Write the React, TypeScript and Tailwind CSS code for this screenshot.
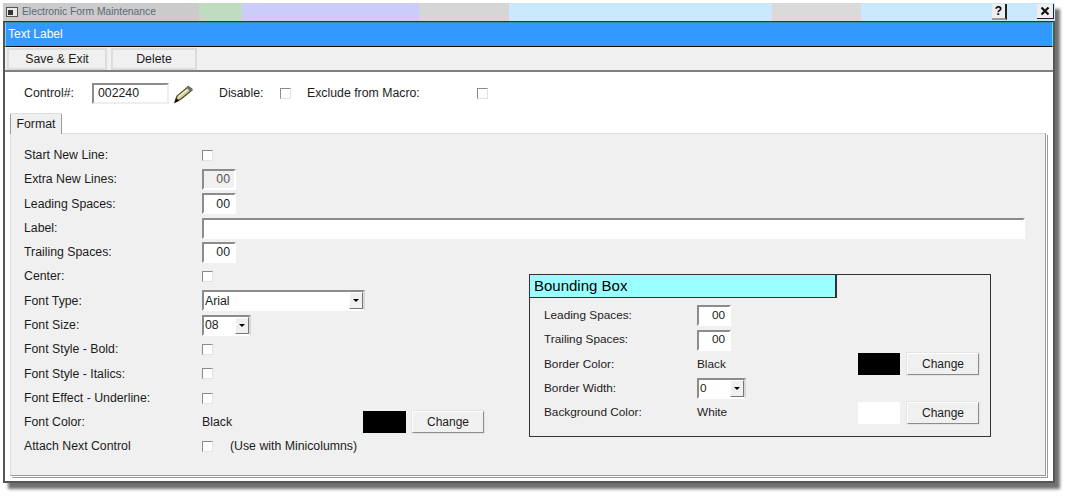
const Check = () => (
  <span className="block h-[11px] w-[11px] border border-t-[#8a8a8a] border-l-[#8a8a8a] border-r-[#e2e2e2] border-b-[#e2e2e2] bg-white" />
);

const NumBox = ({ value, disabled }: { value: string; disabled?: boolean }) => (
  <div
    className={`flex h-[21px] w-[34px] items-center justify-end border-2 border-t-[#8c8c8c] border-l-[#8c8c8c] border-r-white border-b-white pr-[4px] ${
      disabled ? "bg-[#f0f0f0] text-[#555]" : "bg-white"
    }`}
  >
    {value}
  </div>
);

const Select = ({ value, width }: { value: string; width: string }) => (
  <div
    className={`flex h-[21px] items-center justify-between border-2 border-t-[#8c8c8c] border-l-[#8c8c8c] border-r-[#d8d8d8] border-b-white bg-white pl-[1px] ${width}`}
  >
    <span>{value}</span>
    <span className="flex h-[17px] w-[14px] items-center justify-center border border-t-white border-l-white border-r-[#777] border-b-[#777] bg-[#f0f0f0]">
      <span className="h-0 w-0 border-x-[3px] border-t-[3px] border-x-transparent border-t-black" />
    </span>
  </div>
);

const ChangeButton = () => (
  <button className="flex h-[22px] w-[72px] items-center justify-center border border-t-white border-l-white border-r-[#8c8c8c] border-b-[#8c8c8c] bg-[#f0f0f0] text-[12px] outline outline-1 outline-[#e4e4e4]">
    Change
  </button>
);

const Row = ({ label, children }: { label: string; children?: React.ReactNode }) => (
  <div className="flex h-[24.3px] items-center">
    <div className="w-[178px] shrink-0">{label}</div>
    {children}
  </div>
);

const BoxRow = ({ label, children }: { label: string; children?: React.ReactNode }) => (
  <div className="flex h-[24.4px] items-center">
    <div className="w-[153px] shrink-0">{label}</div>
    {children}
  </div>
);

const Pencil = () => (
  <svg width="22" height="20" viewBox="0 0 22 20">
    <path d="M2 18 L4 12 L15 3 L19 6 L8 15 Z" fill="#d6d39a" stroke="#45432a" strokeWidth="1.2" />
    <path d="M15 1.5 L20 5 L17.5 7.5 L13 4 Z" fill="#6e6e6e" />
    <path d="M5.5 12.5 L15 5" stroke="#f2eecb" strokeWidth="1.4" />
    <path d="M1.5 19 L3 14 L6.5 16.8 Z" fill="#141414" />
  </svg>
);

const titleSegments = [
  "w-[196px] bg-[#cbcbcb]",
  "w-[43px] bg-[#c0dcc0]",
  "w-[42px] bg-[#ccccfa]",
  "w-[135px] bg-[#ccccfa]",
  "w-[43px] bg-[#d6d6d6]",
  "w-[47px] bg-[#d6d6d6]",
  "w-[263px] bg-[#cbe9fd]",
  "w-[43px] bg-[#dadada]",
  "w-[46px] bg-[#dadada]",
  "flex-1 bg-[#cbe9fd]",
];

export default function App() {
  return (
    <div className="h-[496px] w-[1068px] overflow-hidden bg-white font-['Liberation_Sans',Arial,sans-serif] text-[12.3px] text-[#1c1c1c]">
      <div className="ml-[3px] mt-[3px] flex h-[480px] w-[1052px] flex-col shadow-[5px_6px_3px_#707070]">
        {/* title strip */}
        <div className="relative flex h-[18px] shrink-0">
          {titleSegments.map((c) => (
            <div key={c} className={c} />
          ))}
          <div className="absolute left-[3px] top-0 flex h-[17px] items-center gap-[4px] text-[10.3px] text-[#5a6a78]">
            <span className="relative block h-[10px] w-[12px] border border-[#555] bg-[#e8e8e8]">
              <span className="absolute left-[1px] top-[2px] block h-[5px] w-[5px] bg-[#333]" />
            </span>
            Electronic Form Maintenance
          </div>
          <button className="absolute left-[989px] top-[1px] flex h-[16px] w-[15px] items-center justify-center border-b-2 border-r-2 border-b-[#9a9a9a] border-r-[#222] bg-[#eeeeee] text-[12px] font-bold text-black">
            ?
          </button>
          <button className="absolute left-[1034px] top-[1px] flex h-[15px] w-[17px] items-center justify-center border-b border-r border-[#222] bg-[#eeeeee]">
            <svg width="10" height="10" viewBox="0 0 10 10">
              <path d="M1.5 1.5 L8.5 8.5 M8.5 1.5 L1.5 8.5" stroke="#111" strokeWidth="2.2" />
            </svg>
          </button>
        </div>

        {/* window body */}
        <div className="flex flex-1 flex-col border-x-2 border-b-2 border-t border-x-[#555] border-b-[#555] border-t-[#333] bg-white">
          <div className="flex h-[25px] shrink-0 items-center border-x border-b border-t border-x-[#66e0e0] border-b-[#111] border-t-[#2f8fa8] bg-[#3399ff] pb-[2px] pl-[2px] text-[12px] text-white">
            Text Label
          </div>
          <div className="flex h-[25px] shrink-0 items-center gap-[4px] border-b-2 border-[#808080] bg-[#f0f0f0] pl-[2px]">
            <button className="flex h-[22px] w-[100px] items-center justify-center border-2 border-[#dcdcdc] bg-[#f0f0f0] pt-[1px]">
              Save &amp; Exit
            </button>
            <button className="flex h-[22px] w-[86px] items-center justify-center border-2 border-[#dcdcdc] bg-[#f0f0f0] pt-[1px]">
              Delete
            </button>
          </div>

          {/* control row */}
          <div className="flex h-[41px] shrink-0 items-center pl-[19px] pt-[2px]">
            <span className="w-[68px]">Control#:</span>
            <div className="flex h-[21px] w-[77px] items-center border-2 border-t-[#8c8c8c] border-l-[#8c8c8c] border-r-[#eeeeee] border-b-[#eeeeee] bg-white pl-[4px]">
              002240
            </div>
            <span className="ml-[4px] w-[46px]">
              <Pencil />
            </span>
            <span className="w-[61px]">Disable:</span>
            <Check />
            <span className="ml-[16px] w-[170px]">Exclude from Macro:</span>
            <Check />
          </div>

          {/* tab */}
          <div className="flex h-[20px] shrink-0 pl-[5px]">
            <div className="z-10 flex h-[21px] w-[52px] items-center justify-center rounded-t-[2px] border-x border-t border-x-[#9a9a9a] border-t-[#dcdcdc] bg-[#f0f0f0]">
              Format
            </div>
          </div>

          {/* format panel */}
          <div className="mb-[5px] ml-[5px] mr-[7px] flex flex-1 flex-col border border-t-[#dcdcdc] border-l-[#dcdcdc] border-r-[#9a9a9a] border-b-[#9a9a9a] bg-[#f0f0f0] pl-[13px] pr-[20px] pt-[9px] shadow-[1px_1px_0_#ffffff,2px_2px_0_#9a9a9a]">
            <Row label="Start New Line:">
              <Check />
            </Row>
            <Row label="Extra New Lines:">
              <NumBox value="00" disabled />
            </Row>
            <Row label="Leading Spaces:">
              <NumBox value="00" />
            </Row>
            <Row label="Label:">
              <div className="h-[21px] flex-1 border-2 border-t-[#8c8c8c] border-l-[#8c8c8c] border-r-white border-b-white bg-white" />
            </Row>
            <Row label="Trailing Spaces:">
              <NumBox value="00" />
            </Row>
            <div className="flex">
              <div className="w-[460px] shrink-0">
                <Row label="Center:">
                  <Check />
                </Row>
                <Row label="Font Type:">
                  <Select value="Arial" width="w-[163px]" />
                </Row>
                <Row label="Font Size:">
                  <Select value="08" width="w-[49px]" />
                </Row>
                <Row label="Font Style - Bold:">
                  <Check />
                </Row>
                <Row label="Font Style - Italics:">
                  <Check />
                </Row>
                <Row label="Font Effect - Underline:">
                  <Check />
                </Row>
                <Row label="Font Color:">
                  <span className="w-[161px]">Black</span>
                  <span className="h-[22px] w-[43px] bg-black" />
                  <span className="ml-[6px]">
                    <ChangeButton />
                  </span>
                </Row>
                <Row label="Attach Next Control">
                  <Check />
                  <span className="ml-[17px]">(Use with Minicolumns)</span>
                </Row>
              </div>

              {/* bounding box */}
              <div className="ml-[45px] mt-[10px] flex h-[163px] w-[462px] flex-col border border-[#333] text-[11.8px]">
                <div className="flex h-[23px] w-[307px] shrink-0 items-center border-b border-r-2 border-b-[#333] border-r-[#333] bg-[#99ffff] pb-[1px] pl-[4px] text-[15px] text-black">
                  Bounding Box
                </div>
                <div className="pl-[14px] pt-[5px]">
                  <BoxRow label="Leading Spaces:">
                    <NumBox value="00" />
                  </BoxRow>
                  <BoxRow label="Trailing Spaces:">
                    <NumBox value="00" />
                  </BoxRow>
                  <BoxRow label="Border Color:">
                    <span className="w-[161px]">Black</span>
                    <span className="h-[22px] w-[42px] bg-black" />
                    <span className="ml-[7px]">
                      <ChangeButton />
                    </span>
                  </BoxRow>
                  <BoxRow label="Border Width:">
                    <Select value="0" width="w-[49px]" />
                  </BoxRow>
                  <BoxRow label="Background Color:">
                    <span className="w-[161px]">White</span>
                    <span className="h-[22px] w-[42px] bg-white" />
                    <span className="ml-[7px]">
                      <ChangeButton />
                    </span>
                  </BoxRow>
                </div>
              </div>
            </div>
          </div>
        </div>
      </div>
    </div>
  );
}
